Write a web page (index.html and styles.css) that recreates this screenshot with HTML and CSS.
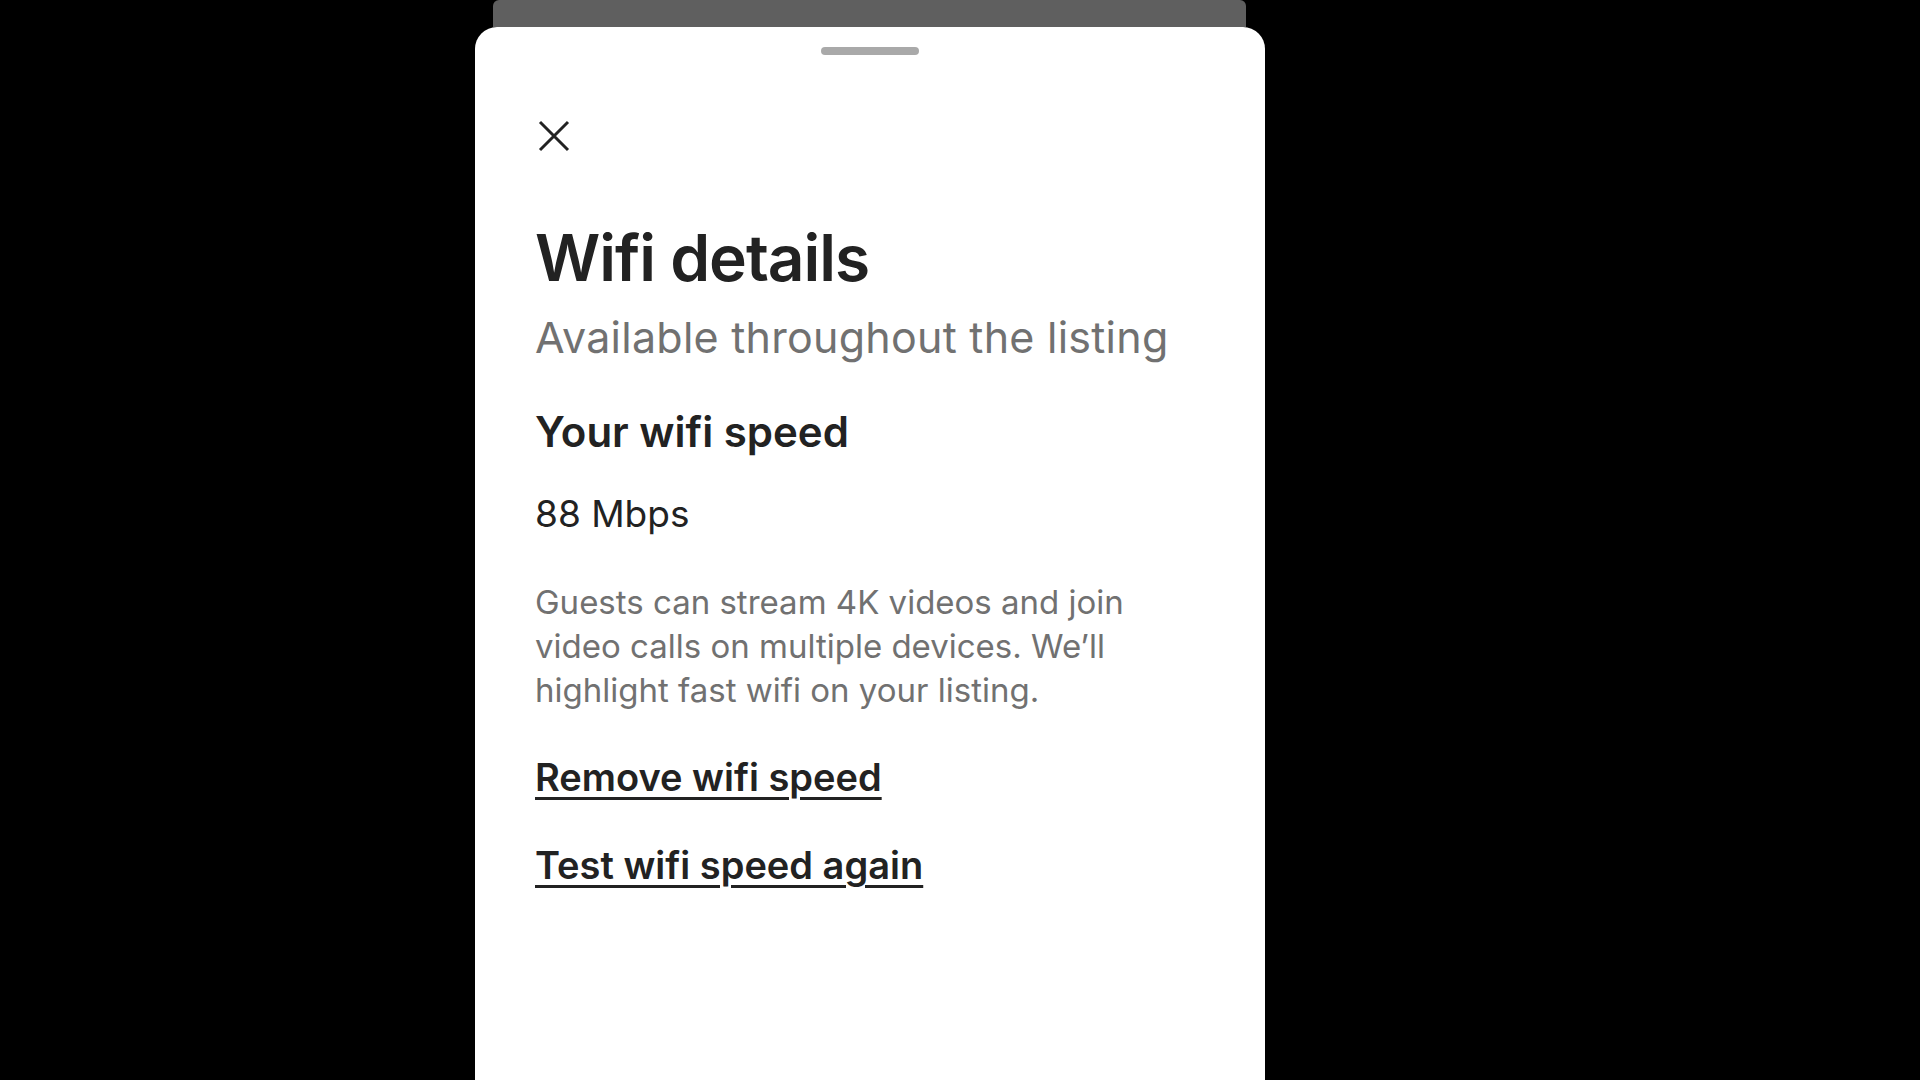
FILE: index.html
```html
<!DOCTYPE html>
<html lang="en">
<head>
    <meta charset="UTF-8">
    <meta name="viewport" content="width=device-width, initial-scale=1.0">
    <title>Wifi details</title>
    <link rel="stylesheet" href="styles.css">
</head>
<body>
    <div class="stage">
        <div class="back-card"></div>
        <div class="sheet">
            <div class="handle"></div>
            <button class="close-btn" type="button" aria-label="Close">
                <svg viewBox="0 0 32 32" width="32" height="32">
                    <path d="M2 2 L30 30 M30 2 L2 30" stroke="#222" stroke-width="3" fill="none"/>
                </svg>
            </button>
            <h1>Wifi details</h1>
            <p class="subtitle">Available throughout the listing</p>
            <h2>Your wifi speed</h2>
            <p class="speed">88 Mbps</p>
            <p class="note">Guests can stream 4K videos and join video calls on multiple devices. We’ll highlight fast wifi on your listing.</p>
            <a class="action" href="#">Remove wifi speed</a>
            <a class="action" href="#">Test wifi speed again</a>
        </div>
    </div>
</body>
</html>
```

FILE: styles.css
```css
body {
    margin: 0;
    background: #000;
    font-family: Inter, "Noto Sans", sans-serif;
    color: #222;
    height: 1080px;
    overflow: hidden;
}
.stage {
    width: 790px;
    margin-left: 475px;
    display: flex;
    flex-direction: column;
}
.back-card {
    height: 27px;
    margin: 0 19px 0 18px;
    background: #5f5f5f;
    border-radius: 6px 6px 0 0;
}
.sheet {
    height: 1053px;
    background: #fff;
    border-radius: 22px 22px 0 0;
    padding: 20px 60px 0;
    box-sizing: border-box;
    display: flex;
    flex-direction: column;
    align-items: flex-start;
}
.handle {
    align-self: center;
    width: 98px;
    height: 8px;
    border-radius: 4px;
    background: #a9a9a9;
}
.close-btn {
    margin: 65px 0 0 3px;
    padding: 0;
    border: none;
    background: none;
    width: 32px;
    height: 32px;
    cursor: pointer;
}
.close-btn svg {
    display: block;
}
h1 {
    margin: 67px 0 0;
    font-size: 64px;
    line-height: 77px;
    font-weight: 600;
    letter-spacing: -1px;
}
.subtitle {
    margin: 15px 0 0;
    font-size: 43px;
    line-height: 52px;
    letter-spacing: 0.25px;
    color: #717171;
}
h2 {
    margin: 43px 0 0;
    font-size: 42px;
    line-height: 52px;
    font-weight: 600;
}
.speed {
    margin: 32px 0 0;
    font-size: 37px;
    line-height: 48px;
}
.note {
    margin: 42px 0 0;
    font-size: 33px;
    line-height: 44px;
    color: #717171;
    max-width: 620px;
}
.action {
    margin-top: 41px;
    font-size: 38px;
    line-height: 48px;
    font-weight: 600;
    color: #222;
    text-decoration: underline;
    text-decoration-thickness: 3px;
    text-underline-offset: 6px;
}
.action + .action {
    margin-top: 40px;
}
```
